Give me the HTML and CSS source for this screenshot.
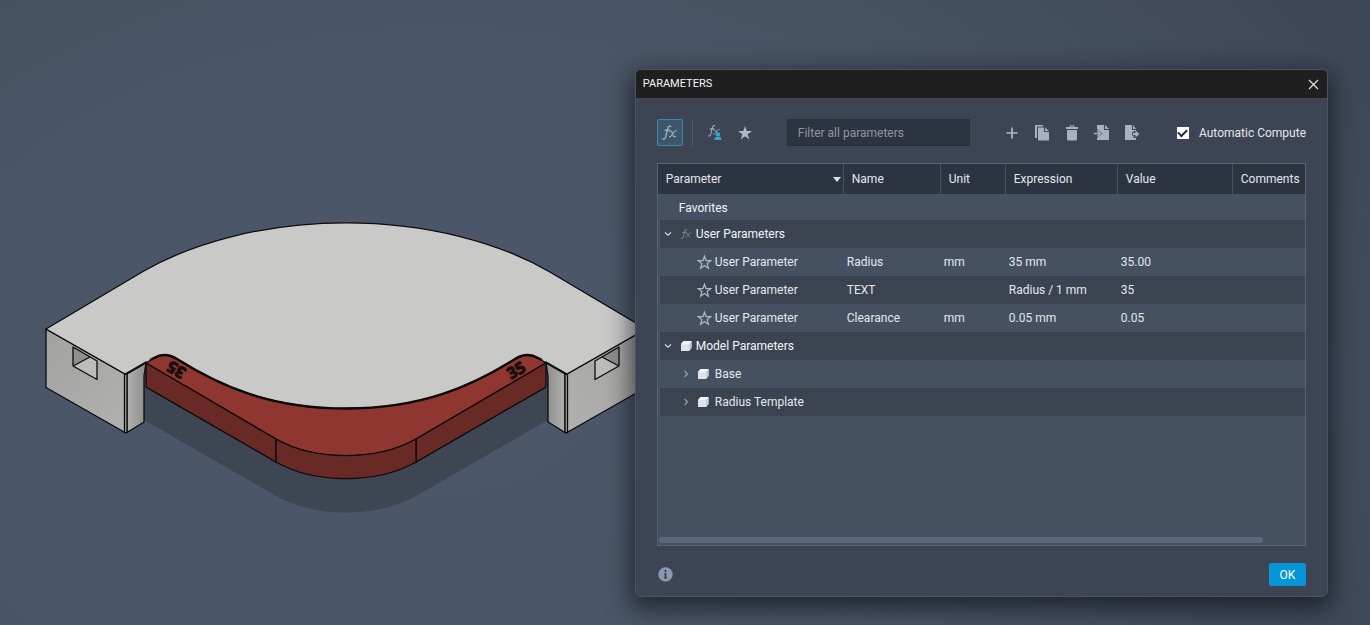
FILE: index.html
```html
<!DOCTYPE html>
<html lang="en">
<head>
<meta charset="utf-8">
<title>Parameters</title>
<link rel="stylesheet" href="styles.css">
</head>
<body>
<main class="workspace">
  <svg class="scene" viewBox="0 0 1370 625" preserveAspectRatio="xMinYMin slice" aria-hidden="true">
    <defs>
      <linearGradient id="side" x1="0" x2="1" y1="0" y2="0"><stop offset="0" stop-color="#b0b0ae"/><stop offset="1" stop-color="#8c8c8b"/></linearGradient>
      <linearGradient id="front" x1="0" x2="1" y1="0" y2="1"><stop offset="0" stop-color="#a2a2a0"/><stop offset="1" stop-color="#b1b1af"/></linearGradient>
      <g id="block" stroke="#0b0b0b" stroke-width="1.3" stroke-linejoin="round">
        <path fill="url(#front)" d="M46 329L125 374V432.500L46 387.500Z"/>
        <path fill="url(#side)" d="M127 374L146 363 144 376V422L127 432.500Z"/>
        <path fill="#a5a5a3" d="M124.500 374H127V432.500H124.500Z"/>
        <path fill="#bcbcba" stroke="none" d="M73 347L97 361V379.500L73 366Z"/>
        <path fill="#8f8f8e" stroke="none" d="M73 347L90 357 73 366Z"/>
        <path fill="none" d="M73 347L97 361V379.500L73 366ZM74 365.500L90 357"/>
      </g>
      <path id="wall" fill="#692925" stroke="#0b0b0b" stroke-width="1.300" d="M146 363L276 439V462L146 387Z"/>
    </defs>
    <path fill="#3e4653" d="M144 388V420L276 496A99 57 0 0 0 416 496L548 420V388L346 430Z"/>
    <use href="#block"/>
    <use href="#block" transform="matrix(-1 0 0 1 692 0)"/>
    <path fill="#c9c9c8" stroke="#0b0b0b" stroke-width="1.300" d="M46 329L143 271.500A287 166 0 0 1 549 271.500L646 329 567 374 546 362 416 430H276L146 362 125 374Z"/>
    <path fill="#8f3631" stroke="#0b0b0b" stroke-width="1.300" d="M146 363L154 358Q165 351.500 177 359C220 386 270 408.500 346 408.500C422 408.500 472 386 515 359Q527 351.500 538 358L546 363 416 439A99 57 0 0 1 276 439Z"/>
    <path fill="none" stroke="#0b0b0b" stroke-width="2.400" d="M150 360L154 358Q165 351.500 177 359C220 386 270 408.500 346 408.500C422 408.500 472 386 515 359Q527 351.500 538 358L542 360"/>
    <use href="#wall"/>
    <use href="#wall" transform="matrix(-1 0 0 1 692 0)"/>
    <path fill="#692925" stroke="#0b0b0b" stroke-width="1.300" d="M276 439A99 57 0 0 0 416 439V462A99 57 0 0 1 276 462Z"/>
    <text class="engraving" transform="translate(176 370) rotate(210)" text-anchor="middle" dominant-baseline="central">35</text>
    <text class="engraving" transform="translate(516 370) rotate(-30)" text-anchor="middle" dominant-baseline="central">35</text>
  </svg>

  <section class="dialog" role="dialog" aria-labelledby="dialog-title">
    <header class="titlebar">
      <h1 id="dialog-title">PARAMETERS</h1>
      <button class="close" aria-label="Close"><svg width="11" height="11" viewBox="0 0 11 11"><path d="M1 1L10 10M10 1L1 10" stroke="#e2e2e2" stroke-width="1.200"/></svg></button>
    </header>
    <div class="content">
      <div class="toolbar">
        <button class="tool active" aria-label="All parameters"><svg width="17" height="17" viewBox="0 0 18 18"><use href="#fx"/></svg></button>
        <span class="divider"></span>
        <button class="tool user" aria-label="User parameters"><svg width="18" height="18" viewBox="0 0 18 18"><g transform="translate(1 0) scale(.75)"><use href="#fx"/></g><circle cx="12" cy="10.500" r="2.200" fill="#38a3d4"/><path fill="#38a3d4" d="M8.500 16V15Q8.500 13 10.500 13H13.500Q15.500 13 15.500 15V16Z"/></svg></button>
        <button class="tool favorite" aria-label="Favorites"><svg width="14" height="14" viewBox="0 0 14 14"><path fill="#b0b7c5" d="M7 0L8.700 5H14L9.700 8.300 11.300 13.500 7 10.300 2.700 13.500 4.300 8.300 0 5H5.300Z"/></svg></button>
        <input class="filter" type="text" placeholder="Filter all parameters" aria-label="Filter all parameters">
        <div class="actions">
          <button class="tool" aria-label="Add"><svg width="16" height="16" viewBox="0 0 16 16"><path d="M8 2.500V13.500M2.500 8H13.500" stroke="#b0b7c5" stroke-width="1.700"/></svg></button>
          <button class="tool" aria-label="Copy"><svg width="16" height="16" viewBox="0 0 16 16"><path fill="#a9b0be" d="M1 0H9V1.500H3V13H1ZM4 2.500H10V7H15V15.500H4ZM11 2.500L15 6H11Z"/></svg></button>
          <button class="tool" aria-label="Delete"><svg width="16" height="16" viewBox="0 0 16 16"><path fill="#a9b0be" d="M2 2H5.500V.500H10.500V2H14V4H2ZM6.500 1.500V2H9.500V1.500ZM3 5H13V14Q13 15.500 11.500 15.500H4.500Q3 15.500 3 14Z"/></svg></button>
          <button class="tool" aria-label="Import"><svg width="16" height="16" viewBox="0 0 16 16"><path fill="#a9b0be" d="M3 0H10V5H15V15H3V13L8.500 8.500 3 4ZM11 0L15 4H11Z"/><path d="M0 8.500H6M3.500 5.500L6.500 8.500 3.500 11.500" fill="none" stroke="#a9b0be" stroke-width="1.600"/></svg></button>
          <button class="tool" aria-label="Export"><svg width="16" height="16" viewBox="0 0 16 16"><path fill="#a9b0be" d="M1 0H8V5H12V6H9.500V7.500H8V10.500H9.500V13H12V15H1ZM9 0L12 4H9Z"/><path fill="#a9b0be" d="M9 8H11.500V5.500L15.500 9 11.500 12.500V10H9Z"/></svg></button>
        </div>
        <label class="compute"><input type="checkbox" checked>Automatic Compute</label>
      </div>

      <div class="grid">
        <table>
          <colgroup><col class="c-param"><col class="c-name"><col class="c-unit"><col class="c-expr"><col class="c-value"><col></colgroup>
          <thead><tr>
            <th><span class="sorted">Parameter<svg width="8" height="5" viewBox="0 0 8 5"><path fill="#d9e2ec" d="M0 0H8L4 5Z"/></svg></span></th>
            <th>Name</th><th>Unit</th><th>Expression</th><th>Value</th><th>Comments</th>
          </tr></thead>
          <tbody>
            <tr class="favorites"><td colspan="6"><span class="cell">Favorites</span></td></tr>
            <tr><td colspan="6"><span class="cell group"><svg class="arrow" width="8" height="8" viewBox="0 0 8 8"><use href="#open"/></svg><svg width="12" height="12" viewBox="0 0 18 18" opacity=".7"><use href="#fx"/></svg>User Parameters</span></td></tr>
            <tr><td><span class="cell leaf"><svg width="15" height="15" viewBox="0 0 15 15"><use href="#star"/></svg>User Parameter</span></td><td>Radius</td><td>mm</td><td>35 mm</td><td>35.00</td><td></td></tr>
            <tr><td><span class="cell leaf"><svg width="15" height="15" viewBox="0 0 15 15"><use href="#star"/></svg>User Parameter</span></td><td>TEXT</td><td></td><td>Radius / 1 mm</td><td>35</td><td></td></tr>
            <tr><td><span class="cell leaf"><svg width="15" height="15" viewBox="0 0 15 15"><use href="#star"/></svg>User Parameter</span></td><td>Clearance</td><td>mm</td><td>0.05 mm</td><td>0.05</td><td></td></tr>
            <tr><td colspan="6"><span class="cell group"><svg class="arrow" width="8" height="8" viewBox="0 0 8 8"><use href="#open"/></svg><svg width="12" height="12" viewBox="0 0 12 12"><use href="#cube"/></svg>Model Parameters</span></td></tr>
            <tr><td colspan="6"><span class="cell sub"><svg class="arrow" width="8" height="8" viewBox="0 0 8 8"><use href="#closed"/></svg><svg width="12" height="12" viewBox="0 0 12 12"><use href="#cube"/></svg>Base</span></td></tr>
            <tr><td colspan="6"><span class="cell sub"><svg class="arrow" width="8" height="8" viewBox="0 0 8 8"><use href="#closed"/></svg><svg width="12" height="12" viewBox="0 0 12 12"><use href="#cube"/></svg>Radius Template</span></td></tr>
          </tbody>
        </table>
        <div class="scrollbar"><div class="thumb"></div></div>
      </div>

      <footer class="footer">
        <svg width="15" height="15" viewBox="0 0 15 15" role="img" aria-label="Information"><circle cx="7.500" cy="7.500" r="7.200" fill="#8c98ad"/><circle cx="7.500" cy="3.900" r="1.100" fill="#2f3846"/><path d="M6 6.300H8.400V10.500H9.300V11.500H5.800V10.500H6.700V7.200H6Z" fill="#2f3846"/></svg>
        <button class="ok">OK</button>
      </footer>
    </div>
  </section>
</main>
<svg class="symbols" width="0" height="0" aria-hidden="true"><defs>
  <g id="fx" fill="none" stroke="#a3aebd" stroke-linecap="round"><path stroke-width="1.400" d="M10.500 2.600Q8.300.900 7.300 4.500L5 13.500Q4.100 17 1.800 15.700M4.300 6.500H9.300"/><path stroke-width="1.100" d="M9.300 8Q11 6.800 11.800 9L13 12.500Q13.700 14.300 15.500 13M16.300 7.300Q14.800 6.800 13.300 9L10.800 12.500Q9.800 14.200 8.800 13.300"/></g>
  <path id="star" fill="none" stroke="#aeb7c6" stroke-width="1.200" d="M7.500 1.200L9.100 5.600H13.800L10.100 8.500 11.400 13.200 7.500 10.500 3.600 13.200 4.900 8.500 1.200 5.600H5.900Z"/>
  <g id="cube"><path fill="#e0e4e9" d="M1 4L3.500 1H11.500V8L9 11H1Z"/><path fill="#f4f6f8" d="M1 4L3.500 1H11.500L9 4Z"/><path fill="#c9cfd7" d="M9 4L11.500 1V8L9 11Z"/></g>
  <path id="open" fill="none" stroke="#d2dae4" stroke-width="1.200" d="M1 2.500L4 5.200 7 2.500"/>
  <path id="closed" fill="none" stroke="#98a4b4" stroke-width="1.100" d="M2.500 1L5.500 4 2.500 7"/>
</defs></svg>
</body>
</html>
```
FILE: styles.css
```css
* { box-sizing: border-box; }

body {
  margin: 0;
  font: 12px/16px Roboto, "Noto Sans", sans-serif;
  color: #e4e8ee;
}

button, input { font: inherit; color: inherit; }
button { padding: 0; border: 0; background: none; }
svg { display: block; flex: none; }
.symbols { position: absolute; }

.workspace {
  position: relative;
  height: 100vh;
  min-height: 560px;
  overflow: hidden;
  background: radial-gradient(ellipse 75% 110% at 32% 62%, #4c586a 0, #4a5667 50%, #3e4858 100%);
}

.scene { width: 100%; height: 100%; }
.engraving { font: 700 16px "Noto Sans", sans-serif; fill: #300f0e; stroke: #0b0b0b; stroke-width: 1px; }

.dialog {
  position: absolute;
  top: 69px;
  right: 42px;
  bottom: 28px;
  width: 50.6%;
  min-width: 680px;
  display: flex;
  flex-direction: column;
  overflow: hidden;
  border: 1px solid #4a5361;
  border-radius: 6px;
  background: #3d4453;
  box-shadow: 0 8px 24px 4px rgba(12, 14, 20, .65);
}

.titlebar {
  display: flex;
  align-items: center;
  justify-content: space-between;
  height: 28px;
  padding: 0 8px 0 7px;
  background: #1f1f1f;
}
.titlebar h1 { margin: 0; font-weight: 400; font-size: 11px; line-height: 16px; color: #f4f4f4; }

.content {
  flex: 1;
  display: flex;
  flex-direction: column;
  padding: 21px 21px 10px;
}

.toolbar { display: flex; align-items: center; height: 27px; }
.tool { display: grid; place-items: center; width: 26px; height: 27px; }
.active { border: 1px solid #3f86ae; border-radius: 2px; background: #3c566c; }
.divider { width: 1px; height: 26px; margin-left: 9px; background: #505b6b; }
.user { margin-left: 9px; }
.favorite { margin-left: 4px; }
.filter {
  width: 183px;
  height: 27px;
  margin-left: 29px;
  padding: 0 10px;
  border: 1px solid #28303c;
  background: #2d3441;
}
.filter::placeholder { color: #8d949f; opacity: 1; }
.actions { display: flex; gap: 4px; margin-left: 29px; }
.actions .tool { width: 26px; }
.compute { display: flex; align-items: center; gap: 10px; margin-left: auto; }
.compute input {
  appearance: none;
  width: 12px;
  height: 12px;
  margin: 0;
  background: #fff;
  display: grid;
  place-items: center;
}
.compute input:checked::before {
  content: "";
  width: 7px;
  height: 4px;
  border: solid #222a35;
  border-width: 0 0 2px 2px;
  transform: translateY(-1px) rotate(-45deg);
}

.grid {
  flex: 1;
  display: flex;
  flex-direction: column;
  justify-content: space-between;
  margin-top: 17px;
  border: 1px solid #586475;
  background: #455160;
}

table { width: 100%; border-collapse: separate; border-spacing: 0; table-layout: fixed; }
.c-param { width: 186px; }
.c-name { width: 97px; }
.c-unit { width: 65px; }
.c-expr { width: 112px; }
.c-value { width: 115px; }
th {
  height: 31px;
  padding: 0 8px;
  border-right: 1px solid #475261;
  border-bottom: 1px solid #475261;
  background: #2d3441;
  font-weight: 400;
  text-align: left;
}
th:last-child { border-right: 0; padding-right: 0; }
.sorted { display: flex; align-items: center; justify-content: space-between; margin-right: -6px; }
td { height: 28px; padding: 0 3px; white-space: nowrap; }
td:first-child { padding-left: 4px; border-left: 2px solid #455160; }
tbody tr:nth-child(even) td { background: #3b4351; }
.favorites td { height: 25px; }
.favorites .cell { padding-left: 15px; }
.cell { display: flex; align-items: center; gap: 6px; }
.group { gap: 4px; }
.group .arrow { margin-right: 4px; }
.leaf { gap: 3px; padding-left: 33px; }
.sub { padding-left: 18px; }
.sub .arrow { margin-right: 1px; }
.group, .favorites { color: #f3f5f8; }

.scrollbar { padding: 0 0 2px 1px; }
.thumb { width: 93.5%; height: 6px; border-radius: 3px; background: #5c687a; }

.footer { display: flex; align-items: center; justify-content: space-between; margin-top: 17px; padding-left: 1px; }
.ok { width: 37px; height: 23px; border-radius: 2px; background: #0696d7; color: #fff; }
```
